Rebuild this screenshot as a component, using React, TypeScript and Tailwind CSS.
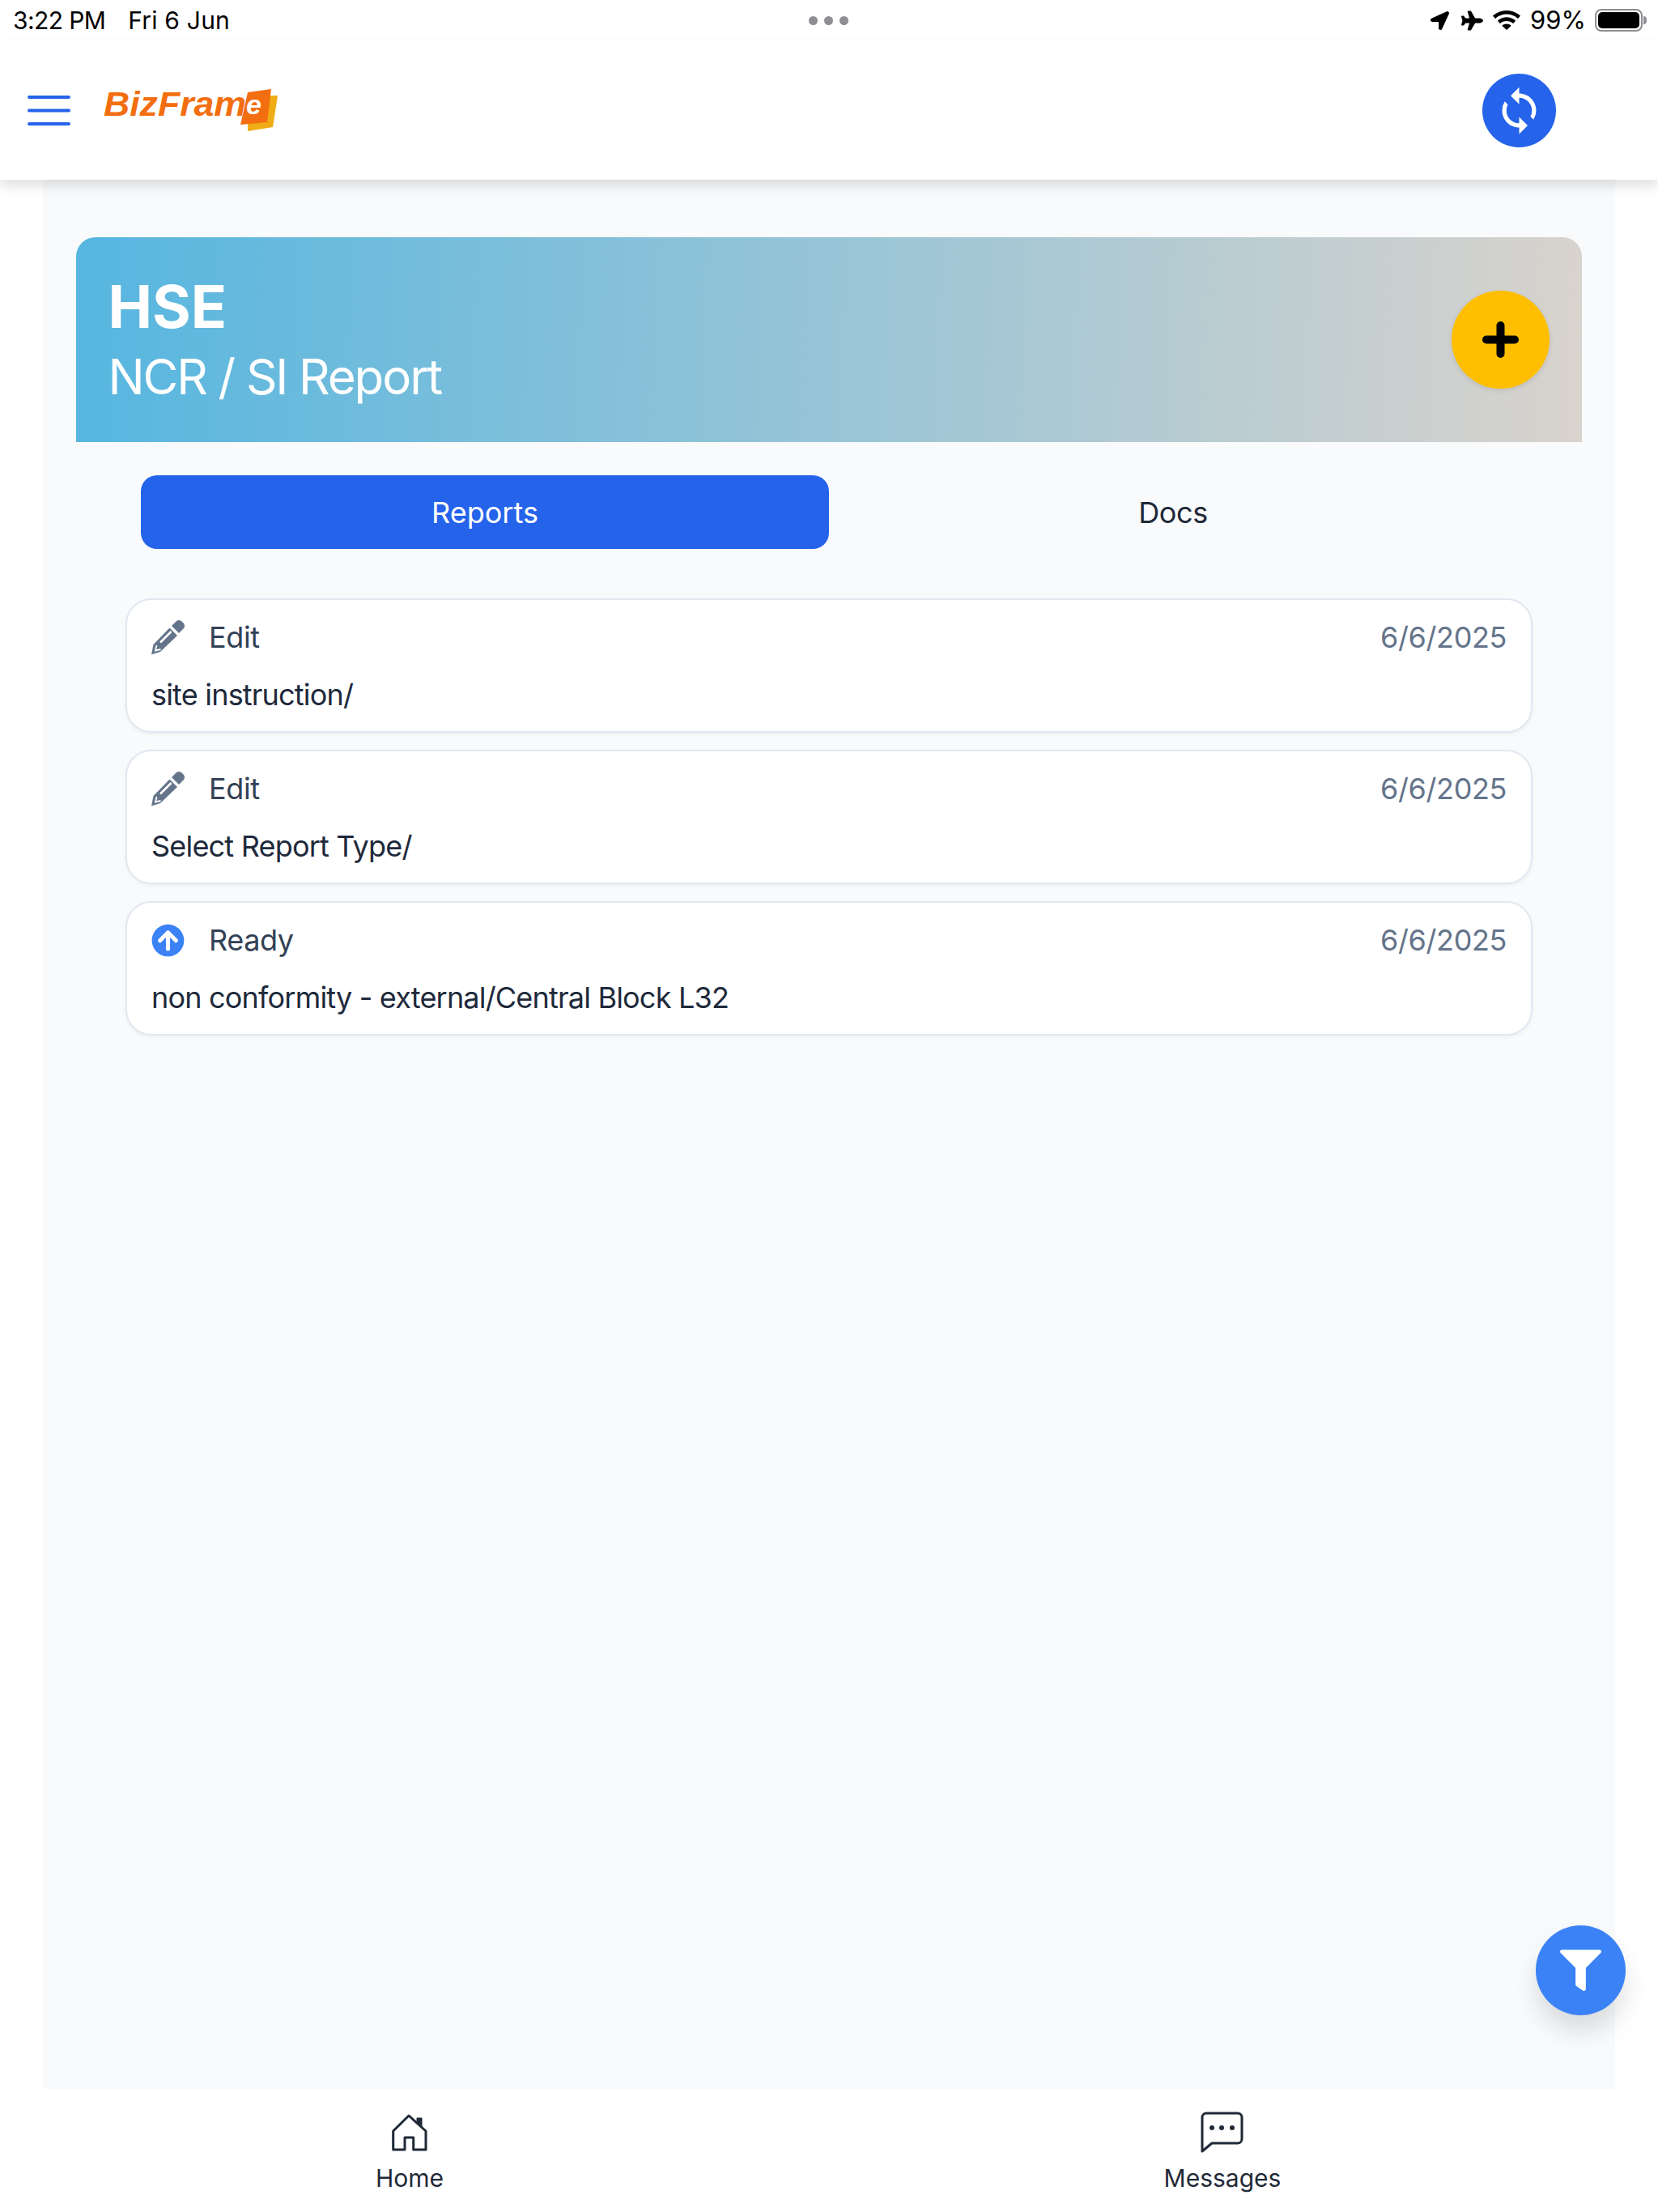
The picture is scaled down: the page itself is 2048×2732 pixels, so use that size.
import { FaArrowCircleUp, FaFilter, FaLocationArrow, FaPlane } from "react-icons/fa";
import { MdSync } from "react-icons/md";

const reports = [
  { status: "Edit", title: "site instruction/", date: "6/6/2025" },
  { status: "Edit", title: "Select Report Type/", date: "6/6/2025" },
  { status: "Ready", title: "non conformity - external/Central Block L32", date: "6/6/2025" },
];

function StatusBar() {
  return (
    <div className="grid h-[50px] grid-cols-3 items-center text-[30px] text-black">
      <div className="flex gap-[28px] pl-[16px]">
        <span className="tracking-[-0.6px]">3:22 PM</span>
        <span className="tracking-[0.2px]">Fri 6 Jun</span>
      </div>
      <div className="flex justify-center gap-[8px]">
        <span className="h-[11px] w-[11px] rounded-full bg-[#8e8e93]" />
        <span className="h-[11px] w-[11px] rounded-full bg-[#8e8e93]" />
        <span className="h-[11px] w-[11px] rounded-full bg-[#8e8e93]" />
      </div>
      <div className="flex items-center justify-end pr-[14px]">
        <FaLocationArrow className="mr-[15px] h-[23px] w-[23px]" />
        <FaPlane className="mr-[12px] h-[27px] w-[27px]" />
        <svg viewBox="0 0 34 24" className="mr-[12px] h-[24px] w-[34px]" fill="black">
          <path d="M17 0C10.500 0 4.700 2.500 0 6.500l3 3.400C6.800 6.600 11.700 4.600 17 4.600s10.200 2 14 5.300l3-3.400C29.300 2.500 23.500 0 17 0z" />
          <path d="M17 8.300c-4.300 0-8.200 1.600-11.200 4.200l3 3.400c2.200-1.900 5.100-3 8.200-3s6 1.100 8.200 3l3-3.400c-3-2.600-6.900-4.200-11.200-4.200z" />
          <path d="M17 16.600c-2.200 0-4.200.8-5.700 2.100L17 24l5.700-5.300c-1.500-1.300-3.500-2.100-5.700-2.100z" />
        </svg>
        <span className="mr-[11px] text-[31px]">99%</span>
        <div className="flex items-center">
          <div className="h-[28px] w-[59px] rounded-[8px] border-2 border-[#8e8e93] p-[2px]">
            <div className="h-full w-full rounded-[5px] bg-black" />
          </div>
          <div className="ml-[1px] h-[10px] w-[4px] rounded-r-full bg-[#8e8e93]" />
        </div>
      </div>
    </div>
  );
}

function Logo() {
  return (
    <svg viewBox="0 0 230 65" className="h-[65px] w-[230px]">
      <polygon points="186,15 223,14 217,53 186,58" fill="#efac14" />
      <polygon points="186,10 215,6 210,47 177,50" fill="#f36e10" />
      <text
        x="8"
        y="39"
        textLength="176"
        lengthAdjust="spacingAndGlyphs"
        fill="#f36e10"
        fontFamily="Liberation Sans"
        fontWeight="700"
        fontStyle="italic"
        fontSize="43"
      >
        BizFram
      </text>
      <text x="184" y="37" fill="#ffffff" fontFamily="Liberation Sans" fontWeight="700" fontStyle="italic" fontSize="34">
        e
      </text>
    </svg>
  );
}

function Header() {
  return (
    <header className="relative z-10 flex h-[172px] items-center bg-white pl-[34px] pr-[126px] shadow-[0_8px_14px_rgba(0,0,0,0.12)]">
      <svg viewBox="0 0 53 37" className="mr-[33px] h-[37px] w-[53px]" fill="none" stroke="#2563eb" strokeWidth="4" strokeLinecap="round">
        <path d="M2 2h49M2 18.500h49M2 35h49" />
      </svg>
      <Logo />
      <button className="ml-auto flex h-[91px] w-[91px] items-center justify-center rounded-full bg-[#2563eb] text-white">
        <MdSync className="h-[63px] w-[63px]" />
      </button>
    </header>
  );
}

function PencilIcon() {
  return (
    <svg viewBox="7 11 41 43" className="h-[43px] w-[41px]">
      <path d="M32 18 38 12Q41 10 44 12L47 15Q49 18 47 21L41 27Z" fill="#64748b" />
      <path d="M29.500 20.500 39 30 18 50 7 53.500 9.500 41Z" fill="#64748b" />
      <path d="M31.500 25 18 38.500" stroke="white" strokeWidth="2.500" fill="none" />
      <path d="M13.500 42 12 48.500 18.500 47" stroke="white" strokeWidth="1.800" fill="none" />
    </svg>
  );
}

function ReportCard({ status, title, date }: { status: string; title: string; date: string }) {
  return (
    <div className="h-[166px] rounded-[32px] border-2 border-[#e2e8f0] bg-white px-[30px] pt-[18px] shadow-[0_2px_4px_rgba(0,0,0,0.05)]">
      <div className="flex h-[56px] items-center justify-between">
        <div className="flex items-center gap-[30px]">
          {status === "Ready" ? <FaArrowCircleUp className="h-[41px] w-[41px] text-[#3b82f6]" /> : <PencilIcon />}
          <span className="text-[36px] leading-[56px] tracking-[-0.4px] text-[#334155]">{status}</span>
        </div>
        <span className="text-[36px] leading-[56px] tracking-[-0.4px] text-[#64748b]">{date}</span>
      </div>
      <div className="mt-[15px] text-[36px] leading-[56px] tracking-[-0.8px] text-[#1e293b]">{title}</div>
    </div>
  );
}

export default function App() {
  return (
    <div className="relative flex h-[2732px] w-[2048px] flex-col overflow-hidden bg-white [font-family:Inter,sans-serif]">
      <StatusBar />
      <Header />

      <main className="mx-[53px] flex-1 bg-[#f8fafc] pl-[40.5px] pr-[41px] pt-[71px]">
        {/* Banner */}
        <div className="flex h-[253px] items-center justify-between rounded-t-[24px] bg-[linear-gradient(92deg,#56b6e0,#d9d3cd)] pl-[40px] pr-[40px]">
          <div className="text-white">
            <h1 className="text-[73px] font-bold leading-[80px]">HSE</h1>
            <p className="mt-[10px] text-[60px] leading-[72px] tracking-[-2.1px]">NCR / SI Report</p>
          </div>
          <button className="flex h-[121px] w-[121px] items-center justify-center rounded-full bg-[#ffbf00] shadow-[0_2px_6px_rgba(0,0,0,0.1)]">
            <svg viewBox="0 0 45 45" className="h-[45px] w-[45px]" fill="none" stroke="black" strokeWidth="10" strokeLinecap="round">
              <path d="M22.500 5v35M5 22.500h35" />
            </svg>
          </button>
        </div>

        {/* Tabs */}
        <div className="ml-[80.5px] mr-[80px] mt-[41px] grid h-[91px] grid-cols-2 text-[36px]">
          <button className="rounded-[20px] bg-[#2563eb] text-white">Reports</button>
          <button className="tracking-[-0.4px] text-[#1f2937]">Docs</button>
        </div>

        {/* Report list */}
        <div className="ml-[61.5px] mr-[61px] mt-[61px] flex flex-col gap-[21px]">
          {reports.map((r, i) => (
            <ReportCard key={i} {...r} />
          ))}
        </div>
      </main>

      <nav className="ml-[4px] grid h-[152px] w-[2008px] grid-cols-2 text-[30px] text-[#1f2937]">
        <div className="flex flex-col items-center pt-[30px]">
          <svg viewBox="0 0 48 48" className="h-[48px] w-[48px]" fill="none" stroke="#1f2937" strokeWidth="3" strokeLinejoin="round">
            <path d="M23 3 3.700 22V45H18V30H28.700V45H44V22Z" />
            <path d="M33 6H39V18L33 12Z" fill="#1f2937" strokeWidth="1" />
          </svg>
          <span className="mt-[12px] leading-[40px]">Home</span>
        </div>
        <div className="flex flex-col items-center pt-[26px]">
          <svg viewBox="0 0 56 56" className="h-[56px] w-[56px]" fill="none" stroke="#1f2937" strokeWidth="3" strokeLinejoin="round">
            <path d="M3 51V9A5 5 0 0 1 8 4H47A5 5 0 0 1 52 9V36A5 5 0 0 1 47 41H15Z" />
            <circle cx="15" cy="22" r="3" fill="#1f2937" stroke="none" />
            <circle cx="27" cy="22" r="3" fill="#1f2937" stroke="none" />
            <circle cx="40" cy="22" r="3" fill="#1f2937" stroke="none" />
          </svg>
          <span className="mt-[8px] leading-[40px]">Messages</span>
        </div>
      </nav>

      <button className="absolute left-[1897px] top-[2378px] flex h-[111px] w-[111px] items-center justify-center rounded-full bg-[#3b82f6] text-white shadow-[0_20px_30px_rgba(0,0,0,0.12)]">
        <FaFilter className="h-[51px] w-[51px]" />
      </button>
    </div>
  );
}
